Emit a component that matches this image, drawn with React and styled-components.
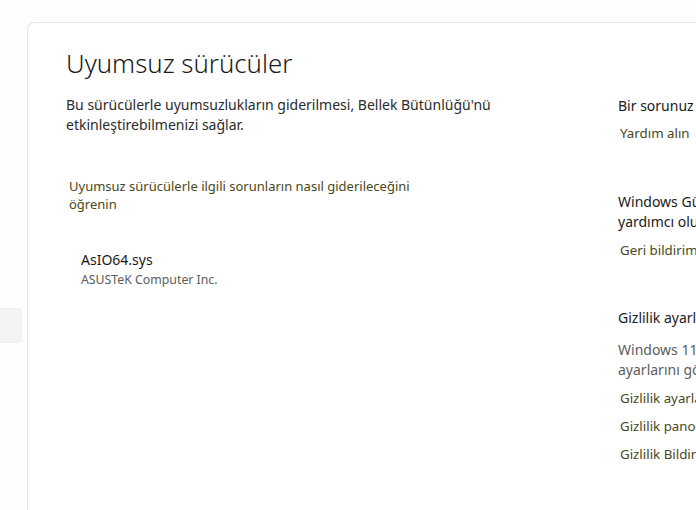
import React from "react";
import styled, { createGlobalStyle } from "styled-components";

const GlobalStyle = createGlobalStyle`
  html, body {
    margin: 0;
    padding: 0;
    background: #fdfdfd;
    overflow: hidden;
  }
  body {
    font-family: "Noto Sans", "Open Sans", sans-serif;
    color: #1b1b1b;
    -webkit-font-smoothing: antialiased;
  }
`;

const Window = styled.div`
  display: flex;
  width: 960px;
  height: 510px;
`;

const Sidebar = styled.nav`
  width: 27px;
  flex-shrink: 0;
  overflow: hidden;
  padding-top: 308px;
  box-sizing: border-box;
`;

const NavItem = styled.div`
  margin-left: -30px;
  width: 52px;
  height: 35px;
  border-radius: 4px;
  background: ${(p) => (p.$active ? "#f4f4f4" : "transparent")};
  border: 1px solid ${(p) => (p.$active ? "#efefef" : "transparent")};
  box-sizing: border-box;
`;

const Panel = styled.main`
  flex: 1;
  margin-top: 22px;
  background: #ffffff;
  border-top: 1px solid #e6e6e6;
  border-left: 1px solid #e6e6e6;
  border-top-left-radius: 8px;
  display: flex;
  padding: 22px 0 0 38px;
`;

const MainColumn = styled.section`
  width: 552px;
  flex-shrink: 0;
`;

const Title = styled.h1`
  margin: 0;
  font-size: 25.8px;
  font-weight: 300;
  line-height: 36px;
  color: #1a1a1a;
`;

const Description = styled.p`
  margin: 14px 0 0;
  max-width: 460px;
  font-size: 14px;
  line-height: 20px;
  color: #2b2b2b;
`;

const Link = styled.a`
  display: block;
  margin: ${(p) => p.$mt || "0"} 0 0 ${(p) => p.$indent || "2px"};
  max-width: ${(p) => p.$width || "none"};
  font-size: ${(p) => p.$size || "13.3px"};
  line-height: ${(p) => p.$lh || "20px"};
  color: #4a4720;
  text-decoration: none;
  white-space: ${(p) => (p.$nowrap ? "nowrap" : "normal")};
  cursor: pointer;
`;

const DriverItem = styled.div`
  margin-top: 37px;
  padding-left: 15px;
`;

const DriverName = styled.div`
  font-size: 14px;
  line-height: 20px;
  color: #1a1a1a;
`;

const DriverVendor = styled.div`
  font-size: 12.3px;
  line-height: 20px;
  color: #5c5c5c;
`;

const Aside = styled.aside`
  width: 280px;
  padding-top: 51px;
`;

const Group = styled.div`
  margin-top: ${(p) => p.$mt || "0"};
`;

const GroupTitle = styled.div`
  font-size: 14px;
  line-height: 20px;
  color: #1a1a1a;
  white-space: nowrap;
`;

const GroupText = styled.div`
  margin-top: 12px;
  font-size: 14px;
  line-height: 20px;
  color: #5d5d5d;
  white-space: nowrap;
`;

export default function App() {
  return (
    <>
      <GlobalStyle />
      <Window>
        <Sidebar>
          <NavItem $active />
        </Sidebar>
        <Panel>
          <MainColumn>
            <Title>Uyumsuz sürücüler</Title>
            <Description>
              Bu sürücülerle uyumsuzlukların giderilmesi, Bellek Bütünlüğü'nü
              etkinleştirebilmenizi sağlar.
            </Description>
            <Link $mt="42px" $width="360px" $lh="18px" $indent="3px" $size="13px">
              Uyumsuz sürücülerle ilgili sorunların nasıl giderileceğini
              öğrenin
            </Link>
            <DriverItem>
              <DriverName>AsIO64.sys</DriverName>
              <DriverVendor>ASUSTeK Computer Inc.</DriverVendor>
            </DriverItem>
          </MainColumn>
          <Aside>
            <Group>
              <GroupTitle>Bir sorunuz mu var?</GroupTitle>
              <Link $mt="7px" $nowrap>Yardım alın</Link>
            </Group>
            <Group $mt="49px">
              <GroupTitle>
                Windows Güvenliği'ni geliştirmeye
                <br />
                yardımcı olun
              </GroupTitle>
              <Link $mt="8px" $nowrap>Geri bildirim gönderin</Link>
            </Group>
            <Group $mt="48px">
              <GroupTitle>Gizlilik ayarlarınızı değiştirin</GroupTitle>
              <GroupText>
                Windows 11 cihazınızın gizlilik
                <br />
                ayarlarını görüntüleyin ve değiştirin.
              </GroupText>
              <Link $mt="8px" $nowrap>Gizlilik ayarları</Link>
              <Link $mt="8px" $nowrap>Gizlilik panosu</Link>
              <Link $mt="8px" $nowrap>Gizlilik Bildirimi</Link>
            </Group>
          </Aside>
        </Panel>
      </Window>
    </>
  );
}
